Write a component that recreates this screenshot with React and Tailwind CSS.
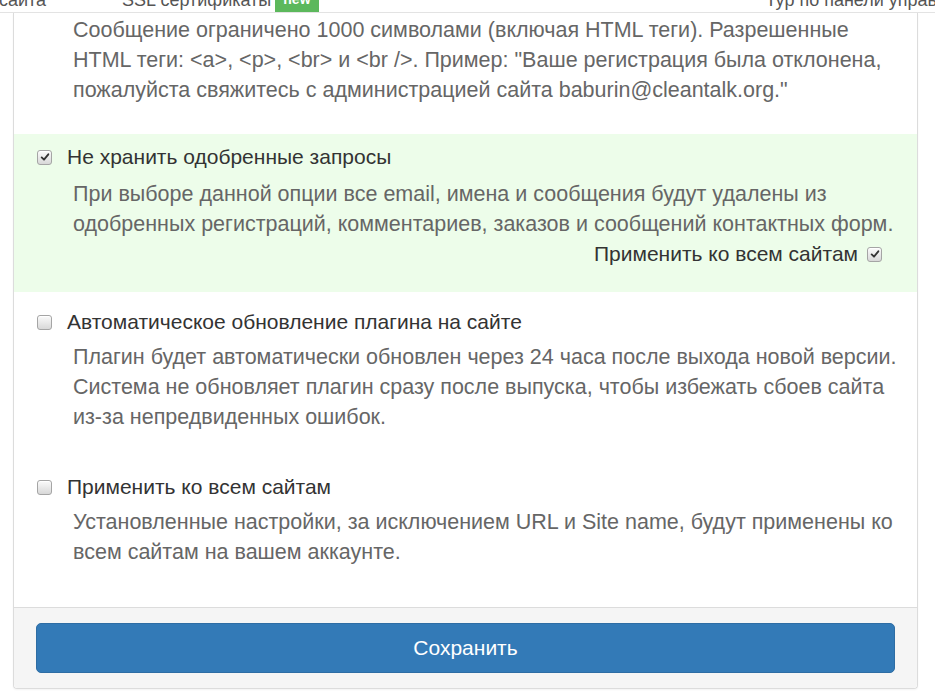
import React from 'react';

const font = { fontFamily: '"Liberation Sans", Arial, sans-serif' };

const Box = ({ checked }) => (
  <span className="inline-flex h-[15px] w-[15px] shrink-0 items-center justify-center rounded-[3px] border border-[#a5a5a5] bg-gradient-to-b from-[#fbfbfb] to-[#d8d8d8] shadow-[inset_0_1px_0_#fff]">
    {checked && (
      <svg viewBox="0 0 12 12" className="h-[10px] w-[10px]">
        <path d="M2 6.5 L4.8 9.2 L10 2.8" fill="none" stroke="#333" strokeWidth="2.2" strokeLinecap="round" strokeLinejoin="round" />
      </svg>
    )}
  </span>
);

const Option = ({ checked, label, children }) => (
  <>
    <label className="flex h-[30px] items-center text-[21px] text-[#333]">
      <span className="ml-[23px] mr-[15px] flex"><Box checked={checked} /></span>
      {label}
    </label>
    <div className="mt-[5px] pl-[59px] pr-[20px] text-[21.5px] leading-[30px] text-[#666]">{children}</div>
  </>
);

export default function App() {
  return (
    <div className="min-h-[695px] bg-white" style={font}>
      {/* cut-off top menu */}
      <div className="relative h-[13px] overflow-hidden border-b border-[#e3e3e3] text-[18px] text-[#555]">
        <div className="absolute left-0 right-0 top-[-13px] flex items-center whitespace-nowrap">
          <span className="-ml-[26px]">на сайта</span>
          <span className="ml-[76px]">SSL сертификаты</span>
          <span className="ml-[4px] rounded-[3px] bg-[#5cb85c] px-[8px] pt-[2px] pb-[4px] text-[14px] font-bold text-white">new</span>
          <span className="ml-auto -mr-[52px]">Тур по панели управления</span>
        </div>
      </div>

      <div className="ml-[13px] mr-[17px] rounded-b-[4px] border border-t-0 border-[#dcdcdc] shadow-[0_1px_2px_rgba(0,0,0,0.05)]">
        <div className="pb-[29px] pl-[59px] pr-[20px] pt-[2px] text-[21.5px] leading-[30px] text-[#666]">
          Сообщение ограничено 1000 символами (включая HTML теги). Разрешенные HTML теги: &lt;a&gt;, &lt;p&gt;, &lt;br&gt; и &lt;br /&gt;. Пример: "Ваше регистрация была отклонена, пожалуйста свяжитесь с администрацией сайта baburin@cleantalk.org."
        </div>

        <div className="bg-[#edfdea] pb-[23px] pt-[8px]">
          <label className="flex h-[30px] items-center text-[21px] text-[#333]">
            <span className="ml-[23px] mr-[15px] flex"><Box checked /></span>
            Не хранить одобренные запросы
          </label>
          <div className="mt-[7px] pl-[59px] pr-[10px] text-[21.5px] leading-[30px] text-[#666]">
            При выборе данной опции все email, имена и сообщения будут удалены из одобренных регистраций, комментариев, заказов и сообщений контактных форм.
          </div>
          <div className="flex h-[30px] items-center justify-end pr-[35px] text-[21px] text-[#333]">
            <span className="mr-[9px]">Применить ко всем сайтам</span>
            <Box checked />
          </div>
        </div>

        <div className="pb-[40px] pt-[15px]">
          <Option label="Автоматическое обновление плагина на сайте">
            Плагин будет автоматически обновлен через 24 часа после выхода новой версии. Система не обновляет плагин сразу после выпуска, чтобы избежать сбоев сайта из-за непредвиденных ошибок.
          </Option>
          <div className="h-[40px]" />
          <Option label="Применить ко всем сайтам">
            Установленные настройки, за исключением URL и Site name, будут применены ко всем сайтам на вашем аккаунте.
          </Option>
        </div>

        <div className="rounded-b-[4px] border-t border-[#dcdcdc] bg-[#f5f5f5] px-[22px] pb-[15px] pt-[15px]">
          <button className="flex h-[50px] w-full items-center justify-center rounded-[5px] border border-[#2e6da4] bg-[#337ab7] text-[21px] text-white">
            Сохранить
          </button>
        </div>
      </div>
    </div>
  );
}
